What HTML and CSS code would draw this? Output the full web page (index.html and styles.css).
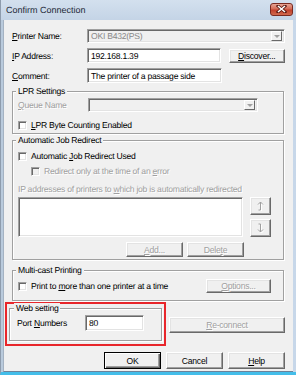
FILE: index.html
```html
<!DOCTYPE html>
<html lang="en">
<head>
    <meta charset="UTF-8">
    <meta name="viewport" content="width=device-width, initial-scale=1.0">
    <title>Confirm Connection</title>
    <link rel="stylesheet" href="styles.css">
</head>
<body>
    <div class="window">
        <div class="titlebar">
            <span class="title">Confirm Connection</span>
            <span class="close-btn">
                <svg width="11" height="8" viewBox="0 0 11 8">
                    <path d="M2 1 L9 7 M9 1 L2 7" stroke="#5a1810" stroke-width="3" stroke-linecap="square"/>
                    <path d="M2 1 L9 7 M9 1 L2 7" stroke="#fff" stroke-width="1.6"/>
                </svg>
            </span>
        </div>

        <div class="client">
            <div class="row row-printer">
                <label class="row-label"><u>P</u>rinter Name:</label>
                <div class="combo disabled grow">
                    <span class="combo-text">OKI B432(PS)</span>
                    <span class="drop-btn"><span class="tri"></span></span>
                </div>
            </div>

            <div class="row row-field">
                <label class="row-label"><u>I</u>P Address:</label>
                <div class="textbox w-ip">192.168.1.39</div>
                <button class="btn btn-discover"><u>D</u>iscover...</button>
            </div>

            <div class="row row-field">
                <label class="row-label"><u>C</u>omment:</label>
                <div class="textbox w-ip">The printer of a passage side</div>
            </div>

            <!-- LPR -->
            <div class="group group-lpr">
                <div class="group-label">LPR Settings</div>
                <div class="row row-queue">
                    <label class="row-label queue-label disabled-text"><u>Q</u>ueue Name</label>
                    <div class="combo disabled w-queue">
                        <span class="combo-text"></span>
                        <span class="drop-btn"><span class="tri"></span></span>
                    </div>
                </div>
                <div class="check-row lpr-check">
                    <span class="checkbox"></span>
                    <span><u>L</u>PR Byte Counting Enabled</span>
                </div>
            </div>

            <!-- redirect -->
            <div class="group group-redirect">
                <div class="group-label">Automatic Job Redirect</div>
                <div class="check-row redirect-check">
                    <span class="checkbox"></span>
                    <span>Automatic <u>J</u>ob Redirect Used</span>
                </div>
                <div class="check-row sub-check disabled-text">
                    <span class="checkbox disabled"></span>
                    <span>Redirect only at the time of an <u>e</u>rror</span>
                </div>
                <div class="list-label disabled-text">IP addresses of printers to <u>w</u>hich job is automatically redirected</div>
                <div class="list-row">
                    <div class="listbox"></div>
                    <div class="updown">
                        <button class="btn btn-arrow" disabled>
                            <svg width="9" height="10" viewBox="0 0 9 10">
                                <g fill="none" stroke="#fff" transform="translate(1 1)"><path d="M4.5 1 V9 M2 3.5 L4.5 1 L7 3.5 M2.5 9 H4.5"/></g>
                                <g fill="none" stroke="#a0a0a0"><path d="M4.5 1 V9 M2 3.5 L4.5 1 L7 3.5 M2.5 9 H4.5"/></g>
                            </svg>
                        </button>
                        <button class="btn btn-arrow" disabled>
                            <svg width="9" height="10" viewBox="0 0 9 10">
                                <g fill="none" stroke="#fff" transform="translate(1 1)"><path d="M4.5 1 V9 M2 6.5 L4.5 9 L7 6.5 M2.5 1 H4.5"/></g>
                                <g fill="none" stroke="#a0a0a0"><path d="M4.5 1 V9 M2 6.5 L4.5 9 L7 6.5 M2.5 1 H4.5"/></g>
                            </svg>
                        </button>
                    </div>
                </div>
                <div class="list-buttons">
                    <button class="btn btn-list" disabled><u>A</u>dd...</button>
                    <button class="btn btn-list" disabled>Dele<u>t</u>e</button>
                </div>
            </div>

            <!-- multicast -->
            <div class="group group-multicast">
                <div class="group-label">Multi-cast Printing</div>
                <div class="check-row multicast-row">
                    <span class="checkbox"></span>
                    <span>Print to <u>m</u>ore than one printer at a time</span>
                    <button class="btn btn-options" disabled><u>O</u>ptions...</button>
                </div>
            </div>

            <!-- web -->
            <div class="web-row">
                <div class="highlight">
                    <div class="group group-web">
                        <div class="group-label web-label">Web setting</div>
                        <div class="row port-row">
                            <label class="port-label">Port <u>N</u>umbers</label>
                            <div class="textbox w-port">80</div>
                        </div>
                    </div>
                </div>
                <button class="btn btn-reconnect" disabled><u>R</u>e-connect</button>
            </div>

            <div class="dialog-buttons">
                <button class="btn btn-dlg default">OK</button>
                <button class="btn btn-dlg">Cancel</button>
                <button class="btn btn-dlg"><u>H</u>elp</button>
            </div>
        </div>
    </div>
</body>
</html>
```

FILE: styles.css
```css
* {
    box-sizing: border-box;
}
html, body {
    margin: 0;
    padding: 0;
}
body {
    width: 296px;
    height: 375px;
    overflow: hidden;
    background: #fff;
    font-family: "Liberation Sans", Arial, sans-serif;
    font-size: 8.6px;
    letter-spacing: -0.25px;
    text-rendering: geometricPrecision;
    color: #000;
}
u {
    text-decoration: underline;
    text-underline-offset: 1px;
}

/* window frame */
.window {
    width: 296px;
    height: 375px;
    display: flex;
    flex-direction: column;
    background: linear-gradient(to right, #b9cadc, #cfdced 40%, #c7d7e9);
    border-left: 1px solid #8e9cad;
    border-bottom: 3px solid #43bde9;
}
.titlebar {
    height: 20px;
    flex: none;
    display: flex;
    align-items: center;
    justify-content: space-between;
    padding: 0 3px 0 5px;
    background: linear-gradient(#d3e0ee, #c4d4e6);
}
.title {
    font-size: 9px;
    letter-spacing: 0;
    color: #1e2a38;
}
.close-btn {
    width: 23px;
    height: 13px;
    margin-top: -2px;
    display: flex;
    align-items: center;
    justify-content: center;
    border: 1px solid #7a2a20;
    border-radius: 3px;
    background: linear-gradient(#e7a595, #d46a55 45%, #c2402b 55%, #d06a4e);
}
.client {
    flex: 1;
    margin: 0 3px 0 2px;
    padding: 0 8px;
    background: #f0f0f0;
    border-left: 1px solid #a4b2c2;
    border-bottom: 1px solid #6d8199;
}

/* rows */
.row {
    display: flex;
    align-items: center;
}
.row-label {
    width: 75px;
    flex: none;
}
.row-printer {
    margin-top: 9px;
    height: 14px;
}
.row-field {
    margin-top: 5px;
    height: 15px;
}
.grow {
    flex: 1;
}
.w-ip {
    width: 135px;
}

/* controls */
.textbox {
    height: 100%;
    background: #fff;
    border: 1px solid;
    border-color: #a0a0a0 #fff #fff #a0a0a0;
    box-shadow: inset 1px 1px 0 #696969, inset -1px -1px 0 #e3e3e3;
    padding: 0 3px;
    display: flex;
    align-items: center;
    white-space: nowrap;
    overflow: hidden;
}
.combo {
    height: 14px;
    display: flex;
    align-items: center;
    border: 1px solid;
    border-color: #a0a0a0 #fff #fff #a0a0a0;
    box-shadow: inset 1px 1px 0 #696969, inset -1px -1px 0 #e3e3e3;
    background: #fff;
    padding: 2px 2px 2px 3px;
}
.combo.disabled {
    background: #f0f0f0;
    color: #8a8a8a;
}
.combo-text {
    flex: 1;
}
.drop-btn {
    width: 11px;
    height: 10px;
    display: flex;
    align-items: center;
    justify-content: center;
    border: 1px solid;
    border-color: #fff #696969 #696969 #fff;
    background: #f0f0f0;
}
.tri {
    width: 0;
    height: 0;
    border-left: 3px solid transparent;
    border-right: 3px solid transparent;
    border-top: 3px solid #a0a0a0;
}
.btn {
    font-family: inherit;
    font-size: inherit;
    letter-spacing: inherit;
    font-weight: normal;
    color: #000;
    background: #f0f0f0;
    border: 1px solid;
    border-color: #fff #696969 #696969 #fff;
    box-shadow: inset -1px -1px 0 #a0a0a0, inset 1px 1px 0 #e3e3e3;
    padding: 0;
    margin: 0;
    display: flex;
    align-items: center;
    justify-content: center;
}
.btn:disabled {
    color: #a0a0a0;
    text-shadow: 1px 1px 0 #fff;
}
.btn.default {
    border-color: #000;
    box-shadow: inset 1px 1px 0 #fff, inset -1px -1px 0 #696969, inset -2px -2px 0 #a0a0a0;
}
.btn-discover {
    width: 57px;
    height: 14px;
    margin-left: 8px;
    align-self: flex-end;
}
.disabled-text {
    color: #a0a0a0;
    text-shadow: 1px 1px 0 #fff;
}
.checkbox {
    width: 9px;
    height: 9px;
    flex: none;
    background: #fff;
    border: 1px solid;
    border-color: #a0a0a0 #fff #fff #a0a0a0;
    box-shadow: inset 1px 1px 0 #696969, inset -1px -1px 0 #e3e3e3;
}
.checkbox.disabled {
    background: #f0f0f0;
}
.check-row {
    display: flex;
    align-items: center;
    gap: 4px;
    height: 10px;
    white-space: nowrap;
}

/* group boxes */
.group {
    margin-right: 1px;
    border: 1px solid #a0a0a0;
    box-shadow: inset 1px 1px 0 #fff, 1px 1px 0 #fff;
    padding: 0 0 0 5px;
}
.group-label {
    width: fit-content;
    height: 10px;
    line-height: 10px;
    margin: -6px 0 0 -2px;
    padding: 0 2px;
    background: #f0f0f0;
}
.group-lpr {
    margin-top: 8px;
    height: 43px;
}
.row-queue {
    margin-top: 2px;
    height: 14px;
}
.queue-label {
    width: 70px;
}
.w-queue {
    width: 170px;
}
.lpr-check {
    margin-top: 8px;
}
.group-redirect {
    margin-top: 6px;
    height: 120px;
}
.redirect-check {
    margin-top: 6px;
}
.sub-check {
    margin-top: 5px;
    padding-left: 13px;
}
.list-label {
    margin-top: 8px;
    height: 10px;
    line-height: 10px;
    white-space: nowrap;
}
.list-row {
    margin-top: 3px;
    height: 40px;
    display: flex;
}
.listbox {
    width: 225px;
    background: #fff;
    border: 1px solid;
    border-color: #a0a0a0 #fff #fff #a0a0a0;
    box-shadow: inset 1px 1px 0 #696969, inset -1px -1px 0 #e3e3e3;
}
.updown {
    margin-left: 7px;
    display: flex;
    flex-direction: column;
    justify-content: space-between;
}
.btn-arrow {
    width: 21px;
    height: 18px;
}
.list-buttons {
    margin-top: 5px;
    padding-left: 108px;
    display: flex;
    gap: 4px;
}
.btn-list {
    width: 57px;
    height: 15px;
}
.group-multicast {
    margin-top: 10px;
    height: 31px;
}
.multicast-row {
    margin-top: 4px;
    height: 14px;
}
.btn-options {
    width: 65px;
    height: 14px;
    margin-left: auto;
    margin-right: 12px;
}

/* web setting */
.web-row {
    margin-top: 1px;
    display: flex;
    align-items: flex-start;
}
.highlight {
    margin-left: -7px;
    width: 162px;
    height: 44px;
    border: 2px solid #e8262b;
    padding: 4px 2px 0;
}
.group-web {
    height: 33px;
    margin-right: 0;
    padding-left: 7px;
}
.web-label {
    margin-left: -3px;
}
.port-row {
    margin-top: 2px;
    height: 16px;
}
.port-label {
    width: 68px;
    flex: none;
}
.w-port {
    width: 59px;
}
.btn-reconnect {
    width: 117px;
    height: 16px;
    margin: 15px 0 0 3px;
}
.dialog-buttons {
    margin-top: 6px;
    display: flex;
    justify-content: flex-end;
    gap: 5px;
}
.btn-dlg {
    width: 57px;
    height: 17px;
}
```
